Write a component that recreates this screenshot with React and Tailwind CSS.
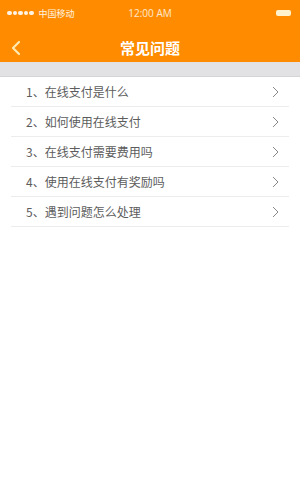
export default function App() {
  const items = [
    "1、在线支付是什么",
    "2、如何使用在线支付",
    "3、在线支付需要费用吗",
    "4、使用在线支付有奖励吗",
    "5、遇到问题怎么处理",
  ];
  const font = { fontFamily: '"Noto Sans CJK SC", "Noto Sans", sans-serif' };
  return (
    <div className="w-[300px] h-[486px] bg-white flex flex-col" style={font}>
      <div className="bg-[#ff8c00] h-[62px] flex flex-col">
        <div className="h-[26px] flex items-center px-[7px] text-white relative">
          <div className="flex items-center gap-[1px]">
            {[0, 1, 2, 3, 4].map((i) => (
              <span key={i} className="w-[4.5px] h-[4.5px] rounded-full bg-white/90 inline-block" />
            ))}
          </div>
          <span className="ml-[5px] text-[9px] leading-none text-white/90">中国移动</span>
          <span className="absolute left-0 right-0 text-center text-[10px] leading-none text-white/80 pointer-events-none" style={{ fontFamily: '"Open Sans", sans-serif' }}>12:00 AM</span>
          <div className="ml-auto mr-[2px] w-[15px] h-[6px] rounded-[2px] bg-[#fff2cc]" />
        </div>
        <div className="flex-1 flex items-center relative">
          <svg className="absolute left-[11px] top-[14px]" width="10" height="16" viewBox="0 0 10 16">
            <path d="M8 2 L2 8 L8 14" fill="none" stroke="#ffe9b0" strokeWidth="2.2" strokeLinecap="round" strokeLinejoin="round" />
          </svg>
          <div className="w-full text-center text-white font-bold text-[15px] leading-none pt-[6px]">常见问题</div>
        </div>
      </div>
      <div className="h-[15px] bg-[#e2e2e4] border-b border-[#d4d4d6]" />
      <div className="flex flex-col">
        {items.map((t) => (
          <div key={t} className="mx-[11px] h-[30px] border-b border-[#ececec] flex items-center pl-[15px] pr-[10px]">
            <span className="text-[12px] text-[#5c5c5c] leading-none pt-[1px]">{t}</span>
            <svg className="ml-auto" width="7" height="12" viewBox="0 0 7 12">
              <path d="M1 1 L6 6 L1 11" fill="none" stroke="#888" strokeWidth="1" />
            </svg>
          </div>
        ))}
      </div>
    </div>
  );
}
